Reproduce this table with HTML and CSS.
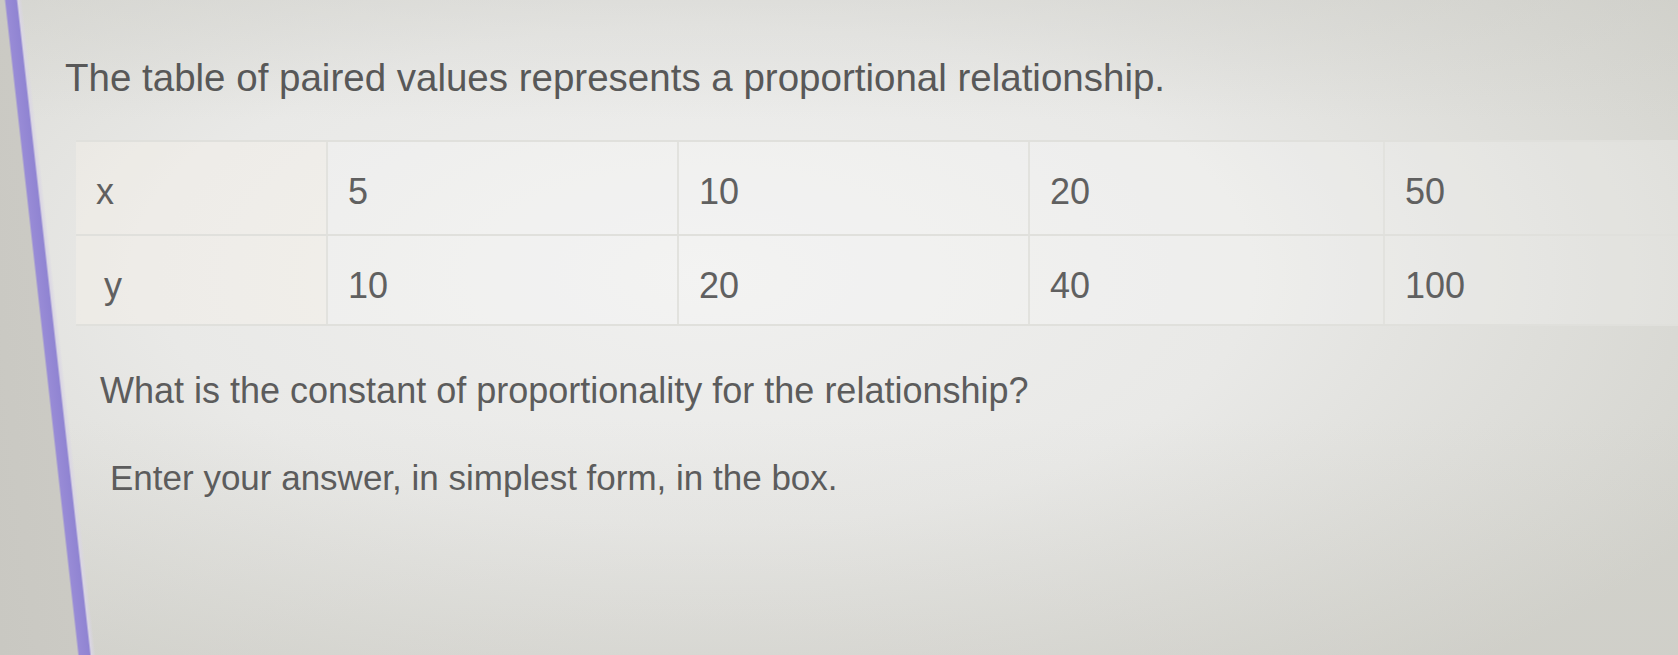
FILE: index.html
```html
<!DOCTYPE html>
<html lang="en">
<head>
<meta charset="utf-8">
<title>Proportional relationship</title>
<link rel="stylesheet" href="styles.css">
</head>
<body>
<main class="page">
  <h1 class="title">The table of paired values represents a proportional relationship.</h1>
  <div class="table" role="table">
    <div class="row" role="row">
      <div class="cell head" role="rowheader">x</div>
      <div class="cell" role="cell">5</div>
      <div class="cell" role="cell">10</div>
      <div class="cell" role="cell">20</div>
      <div class="cell" role="cell">50</div>
    </div>
    <div class="row second" role="row">
      <div class="cell head y" role="rowheader">y</div>
      <div class="cell" role="cell">10</div>
      <div class="cell" role="cell">20</div>
      <div class="cell" role="cell">40</div>
      <div class="cell" role="cell">100</div>
    </div>
  </div>
  <p class="question">What is the constant of proportionality for the relationship?</p>
  <p class="instruction">Enter your answer, in simplest form, in the box.</p>
</main>
</body>
</html>
```
FILE: styles.css
```css
html, body {
  margin: 0;
  padding: 0;
}

body {
  font-family: "Liberation Sans", Arial, sans-serif;
  color: #5c5c5c;
  background: #e2e2df;
}

.page {
  width: 1678px;
  height: 655px;
  overflow: hidden;
  box-sizing: border-box;
  padding-top: 56px;
  background:
    linear-gradient(83.6deg, #c9c8c2 0, #cbcac4 77px, #988bd6 79px, #9084d2 89px, #dad6e4 91px, rgba(230,229,232,0) 95px),
    linear-gradient(180deg, rgba(205,205,200,0.35) 0, rgba(205,205,200,0) 120px, rgba(205,205,200,0) 420px, rgba(200,199,192,0.3) 655px),
    radial-gradient(ellipse 68% 80% at 42% 42%, #f0f0ef 0%, #e9e9e7 48%, #d3d3cd 100%);
}

.title {
  margin: 0 0 0 65px;
  font-size: 38.5px;
  line-height: 44px;
  font-weight: normal;
  color: #585858;
}

.table {
  margin: 40px 0 0 76px;
  display: flex;
  flex-direction: column;
}

.row {
  display: grid;
  grid-template-columns: 250px 351px 351px 355px 1fr;
  height: 92px;
  border-top: 2px solid #e0e0dc;
}

.row.second {
  height: 88px;
  border-bottom: 2px solid #e0e0dc;
}

.cell {
  box-sizing: border-box;
  padding: 30px 0 0 20px;
  font-size: 36px;
  line-height: 40px;
  color: #606060;
  background: rgba(255, 255, 255, 0.22);
  border-left: 2px solid #e2e2de;
}

.cell.head {
  border-left: 0;
  background: rgba(250, 244, 236, 0.35);
}

.cell.y {
  padding-left: 28px;
}

.question {
  margin: 44px 0 0 100px;
  font-size: 36px;
  line-height: 42px;
  color: #5c5c5c;
}

.instruction {
  margin: 46px 0 0 110px;
  font-size: 35px;
  line-height: 40px;
  color: #5c5c5c;
}
```
